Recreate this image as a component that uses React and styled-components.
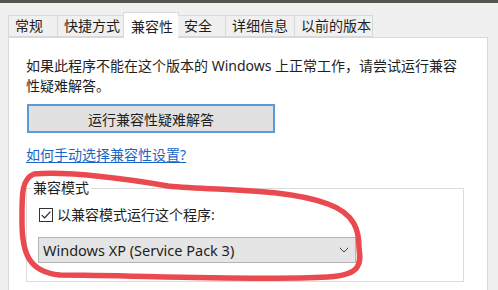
import React from 'react'
import styled, { createGlobalStyle } from 'styled-components'

const GlobalStyle = createGlobalStyle`
  html, body {
    margin: 0;
    padding: 0;
    background: #f0f0f0;
  }
  body {
    font-family: "Noto Sans", "Noto Sans CJK SC", sans-serif;
    color: #1e1e1e;
  }
`

const tabs = [
    { text: '常规', width: 50 },
    { text: '快捷方式', width: 66 },
    { text: '兼容性', width: 56, active: true },
    { text: '安全', width: 48 },
    { text: '详细信息', width: 69 },
    { text: '以前的版本', width: 78 },
]

const App = () => {
    return (
        <Wrapper>
            <GlobalStyle />
            <TopBar />

            <TabStrip>
                {
                    tabs.map(tab => (
                        <Tab key={tab.text} $width={tab.width} $active={tab.active}>
                            {tab.text}
                        </Tab>
                    ))
                }
            </TabStrip>

            <Panel>
                <Description>
                    如果此程序不能在这个版本的 Windows 上正常工作，请尝试运行兼容性疑难解答。
                </Description>

                <TroubleshootButton>运行兼容性疑难解答</TroubleshootButton>

                <HelpLink href="#">如何手动选择兼容性设置?</HelpLink>

                <GroupBox>
                    <GroupLegend>兼容模式</GroupLegend>

                    <CheckRow>
                        <CheckBox>
                            <svg width="12" height="12" viewBox="0 0 12 12">
                                <path d="M1.8 6.2 L4.6 9 L10.4 2.6" fill="none" stroke="#222" strokeWidth="1.2" />
                            </svg>
                        </CheckBox>
                        <CheckLabel>以兼容模式运行这个程序:</CheckLabel>
                    </CheckRow>

                    <Select>
                        <span>Windows XP (Service Pack 3)</span>
                        <svg width="10" height="6" viewBox="0 0 10 6">
                            <path d="M0.8 0.8 L5 5 L9.2 0.8" fill="none" stroke="#444" strokeWidth="1" />
                        </svg>
                    </Select>
                </GroupBox>
            </Panel>

            <Annotation width="498" height="290" viewBox="0 0 498 290">
                <path
                    d="M34 174 C 70 171, 120 178, 168 186 C 220 191, 285 188, 328 204 C 356 214, 359 232, 359 248 C 361 263, 362 275, 328 277 C 250 281, 130 275, 60 275 C 28 272, 22 252, 22 222 C 22 196, 21 179, 34 174 Z"
                    fill="none"
                    stroke="#ea4a4f"
                    strokeWidth="5.5"
                    strokeLinejoin="round"
                />
            </Annotation>
        </Wrapper>
    )
}

export default App

const Wrapper = styled.div`
  position: relative;
  width: 498px;
  height: 290px;
  overflow: hidden;
  background: #f0f0f0;
`

const TopBar = styled.div`
  height: 3px;
  background: #57534f;
`

const TabStrip = styled.div`
  display: flex;
  align-items: flex-end;
  height: 34px;
  padding-left: 8px;
  position: relative;
  z-index: 1;
`

const Tab = styled.div`
  box-sizing: border-box;
  width: ${p => p.$width}px;
  height: ${p => (p.$active ? 26 : 22)}px;
  margin: ${p => (p.$active ? '0 -1px -1px -1px' : '0')};
  padding: ${p => (p.$active ? '2px 0 0 7px' : '0 0 0 6px')};
  display: flex;
  align-items: center;
  font-size: 14px;
  line-height: 1;
  background: ${p => (p.$active ? '#ffffff' : '#f0f0f0')};
  border: 1px solid #d9d9d9;
  border-bottom: ${p => (p.$active ? 'none' : '1px solid #d9d9d9')};
  border-left: ${p => (p.$active ? '1px solid #d9d9d9' : 'none')};
  &:first-child {
    border-left: 1px solid #d9d9d9;
  }
`

const Panel = styled.div`
  box-sizing: border-box;
  margin-left: 8px;
  width: 480px;
  height: 260px;
  background: #ffffff;
  border: 1px solid #d9d9d9;
  padding: 18px 0 0 17px;
`

const Description = styled.p`
  margin: 0;
  width: 440px;
  font-size: 14px;
  line-height: 20px;
`

const TroubleshootButton = styled.button`
  display: flex;
  align-items: center;
  justify-content: center;
  box-sizing: border-box;
  margin: 8px 0 0 1px;
  width: 248px;
  height: 29px;
  padding: 0;
  background: #e1e1e1;
  border: 2px solid #5a9ad8;
  font-family: inherit;
  font-size: 14px;
  color: #1e1e1e;
`

const HelpLink = styled.a`
  display: inline-block;
  margin-top: 12px;
  font-size: 14px;
  line-height: 20px;
  color: #1a66c6;
  text-decoration: underline;
  text-underline-offset: 2px;
`

const GroupBox = styled.fieldset`
  box-sizing: border-box;
  margin: 13px 0 0 0;
  width: 438px;
  min-width: 0;
  padding: 7px 0 18px 11px;
  border: 1px solid #dcdcdc;
`

const GroupLegend = styled.legend`
  margin-left: -7px;
  padding: 0 2px;
  font-size: 14px;
  line-height: 20px;
`

const CheckRow = styled.div`
  display: flex;
  align-items: center;
  gap: 4px;
  height: 20px;
`

const CheckBox = styled.div`
  box-sizing: border-box;
  width: 14px;
  height: 14px;
  margin-left: 1px;
  border: 1px solid #333;
  background: #fff;
  display: flex;
  align-items: center;
  justify-content: center;
`

const CheckLabel = styled.span`
  font-size: 14px;
  line-height: 20px;
`

const Select = styled.div`
  box-sizing: border-box;
  margin-top: 12px;
  width: 318px;
  height: 26px;
  display: flex;
  align-items: center;
  justify-content: space-between;
  padding: 0 6px 0 4px;
  background: #e5e5e5;
  border: 1px solid #b4b4b4;
  font-size: 14.5px;
  color: #1e1e1e;
`

const Annotation = styled.svg`
  position: absolute;
  left: 0;
  top: 0;
  pointer-events: none;
  z-index: 2;
`
